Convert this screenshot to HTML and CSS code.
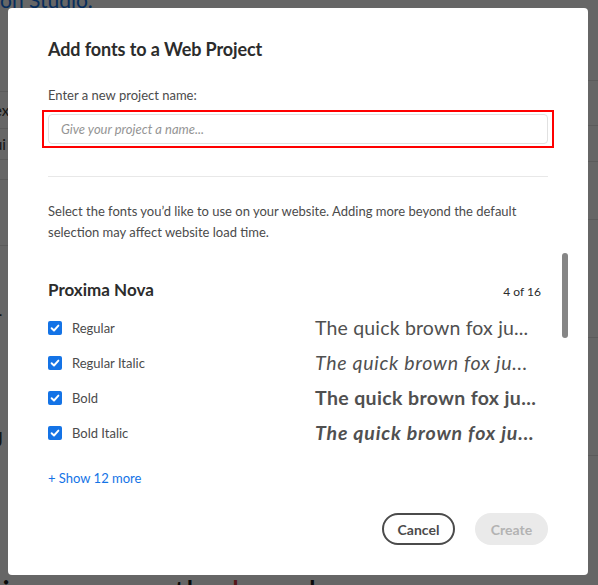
FILE: index.html
```html
<!DOCTYPE html>
<html lang="en">
<head>
<meta charset="utf-8">
<title>Add fonts to a Web Project</title>
<link rel="stylesheet" href="styles.css">
</head>
<body>
<div class="page">
  <div class="page-top">on Studio.</div>
  <div class="page-cols">
    <div class="col-left">
      <div class="lrow r1"></div>
      <div class="lrow r2"><span>ex</span></div>
      <div class="lrow r3"><span>ui</span></div>
      <div class="lrow r4"></div>
      <div class="lrow r5"></div>
      <div class="lrow r6"><span>-</span></div>
      <div class="lrow r7"><span>J</span></div>
    </div>
    <div class="col-mid"></div>
    <div class="col-right">
      <div class="rrow q1"></div>
      <div class="rrow q2"></div>
      <div class="rrow q3"></div>
      <div class="rrow q4"></div>
      <div class="rrow q5"></div>
      <div class="rrow q6"></div>
    </div>
  </div>
  <div class="page-bottom">jumps over the <span class="red">lazy</span> dog</div>
</div>
<div class="overlay"></div>

<div class="modal">
  <h1 class="title">Add fonts to a Web Project</h1>
  <label class="field-label" for="pname">Enter a new project name:</label>
  <div class="highlight">
    <input id="pname" class="name-input" type="text" placeholder="Give your project a name...">
  </div>
  <hr class="divider">
  <p class="intro">Select the fonts you’d like to use on your website. Adding more beyond the default selection may affect website load time.</p>

  <div class="family-head">
    <span class="family-name">Proxima Nova</span>
    <span class="family-count">4 of 16</span>
  </div>

  <ul class="styles">
    <li class="style-row">
      <span class="check"><svg viewBox="0 0 14 14" width="14" height="14"><path d="M3.6 7.2 L6 9.5 L10.4 4.6" fill="none" stroke="#fff" stroke-width="1.9" stroke-linecap="round" stroke-linejoin="round"/></svg></span>
      <span class="style-name">Regular</span>
      <span class="sample s-regular">The quick brown fox ju...</span>
    </li>
    <li class="style-row">
      <span class="check"><svg viewBox="0 0 14 14" width="14" height="14"><path d="M3.6 7.2 L6 9.5 L10.4 4.6" fill="none" stroke="#fff" stroke-width="1.9" stroke-linecap="round" stroke-linejoin="round"/></svg></span>
      <span class="style-name">Regular Italic</span>
      <span class="sample s-italic">The quick brown fox ju...</span>
    </li>
    <li class="style-row">
      <span class="check"><svg viewBox="0 0 14 14" width="14" height="14"><path d="M3.6 7.2 L6 9.5 L10.4 4.6" fill="none" stroke="#fff" stroke-width="1.9" stroke-linecap="round" stroke-linejoin="round"/></svg></span>
      <span class="style-name">Bold</span>
      <span class="sample s-bold">The quick brown fox ju...</span>
    </li>
    <li class="style-row">
      <span class="check"><svg viewBox="0 0 14 14" width="14" height="14"><path d="M3.6 7.2 L6 9.5 L10.4 4.6" fill="none" stroke="#fff" stroke-width="1.9" stroke-linecap="round" stroke-linejoin="round"/></svg></span>
      <span class="style-name">Bold Italic</span>
      <span class="sample s-bolditalic">The quick brown fox ju...</span>
    </li>
  </ul>

  <a class="show-more" href="#">+ Show 12 more</a>

  <div class="footer">
    <button class="btn btn-cancel" type="button">Cancel</button>
    <button class="btn btn-create" type="button" disabled>Create</button>
  </div>

  <div class="scroll-thumb"></div>
</div>
</body>
</html>
```

FILE: styles.css
```css
* { box-sizing: border-box; }

html, body {
  margin: 0;
  padding: 0;
  width: 598px;
  height: 585px;
  overflow: hidden;
}

body {
  font-family: Lato, "Liberation Sans", sans-serif;
  background: #fff;
  position: relative;
}

/* underlying page */
.page {
  height: 585px;
  display: flex;
  flex-direction: column;
  overflow: hidden;
  color: #1a1a1a;
}

.page-top {
  font-size: 21px;
  line-height: 8px;
  color: #1473e6;
  margin-top: -4px;
  height: 12px;
}

.page-cols {
  flex: 1;
  display: flex;
}

.col-left {
  width: 40px;
  display: flex;
  flex-direction: column;
}
.col-mid { flex: 1; }
.col-right {
  width: 40px;
  display: flex;
  flex-direction: column;
}

.lrow {
  border-bottom: 1px solid #e3e3e3;
  font-size: 15px;
  display: flex;
  align-items: center;
  overflow: hidden;
  white-space: nowrap;
  color: #333;
}
.lrow span { margin-left: -6px; }
.r1 { height: 84px; }
.r2 { height: 37px; }
.r3 { height: 31px; }
.r4 { height: 20px; }
.r5 { height: 66px; }
.r6 { height: 132px; border-bottom: 0; font-size: 24px; }
.r7 { height: 120px; border-bottom: 0; font-size: 22px; }

.rrow { border-bottom: 1px solid #e3e3e3; }
.q1 { height: 73px; }
.q2 { height: 45px; }
.q3 { height: 36px; }
.q4 { height: 58px; }
.q5 { height: 118px; }
.q6 { height: 118px; }

.page-bottom {
  height: 10px;
  font-size: 34px;
  line-height: 36px;
  white-space: nowrap;
  padding-left: 2px;
  color: #1a1a1a;
  overflow: visible;
}
.page-bottom .red { color: #d7373f; }

.overlay {
  position: absolute;
  inset: 0;
  background: rgba(0, 0, 0, 0.6);
}

/* modal */
.modal {
  position: absolute;
  left: 8px;
  top: 8px;
  width: 580px;
  height: 567px;
  background: #fff;
  border-radius: 4px;
  padding: 30px 40px 0 40px;
  display: flex;
  flex-direction: column;
  color: #4b4b4b;
}

.title {
  margin: 0;
  font-size: 18px;
  line-height: 22px;
  font-weight: 700;
  color: #2c2c2c;
  letter-spacing: -0.1px;
}

.field-label {
  margin-top: 27px;
  font-size: 13px;
  line-height: 17px;
  color: #4b4b4b;
}

.highlight {
  margin: 6px -6px 0 -6px;
  border: 2px solid #ff0000;
  padding: 2px 4px;
  height: 38px;
}

.name-input {
  display: block;
  width: 100%;
  height: 30px;
  border: 1px solid #e1e1e1;
  border-radius: 4px;
  padding: 0 12px;
  font-family: inherit;
  font-size: 13px;
  color: #4b4b4b;
  background: #fff;
  outline: none;
}
.name-input::placeholder {
  color: #959595;
  font-style: italic;
}

.divider {
  margin: 28px 0 0 0;
  border: 0;
  border-top: 1px solid #e8e8e8;
  height: 0;
}

.intro {
  margin: 24px 0 0 0;
  font-size: 13px;
  line-height: 21px;
  color: #4b4b4b;
}

.family-head {
  margin-top: 36px;
  display: flex;
  justify-content: space-between;
  align-items: baseline;
}
.family-name {
  font-size: 17px;
  font-weight: 700;
  color: #2c2c2c;
  line-height: 22px;
}
.family-count {
  font-size: 12px;
  color: #2c2c2c;
  margin-right: 7px;
}

.styles {
  list-style: none;
  margin: 9px 0 0 0;
  padding: 0;
  display: flex;
  flex-direction: column;
}

.style-row {
  height: 35px;
  display: flex;
  align-items: center;
}

.check {
  width: 14px;
  height: 14px;
  border-radius: 2px;
  background: #1473e6;
  display: flex;
}

.style-name {
  margin-left: 10px;
  font-size: 13px;
  color: #4b4b4b;
  width: 243px;
}

.sample {
  font-size: 19.5px;
  color: #505050;
  white-space: nowrap;
}
.s-regular { letter-spacing: 0.17px; }
.s-italic { font-style: italic; letter-spacing: 0.7px; }
.s-bold { font-weight: 700; letter-spacing: 0.37px; }
.s-bolditalic { font-weight: 700; font-style: italic; letter-spacing: 0.83px; }

.show-more {
  margin-top: 20px;
  font-size: 13px;
  color: #1473e6;
  text-decoration: none;
  align-self: flex-start;
}

.footer {
  margin-top: auto;
  margin-bottom: 30px;
  display: flex;
  justify-content: flex-end;
  gap: 20px;
}

.btn {
  height: 32px;
  border-radius: 16px;
  font-family: inherit;
  font-size: 14px;
  font-weight: 700;
  padding: 0;
}
.btn-cancel {
  width: 73px;
  border: 2px solid #4b4b4b;
  background: #fff;
  color: #4b4b4b;
}
.btn-create {
  width: 73px;
  border: 0;
  background: #eaeaea;
  color: #b3b3b3;
}

.scroll-thumb {
  position: absolute;
  left: 554px;
  top: 245px;
  width: 6px;
  height: 85px;
  border-radius: 3px;
  background: #868686;
}
```
